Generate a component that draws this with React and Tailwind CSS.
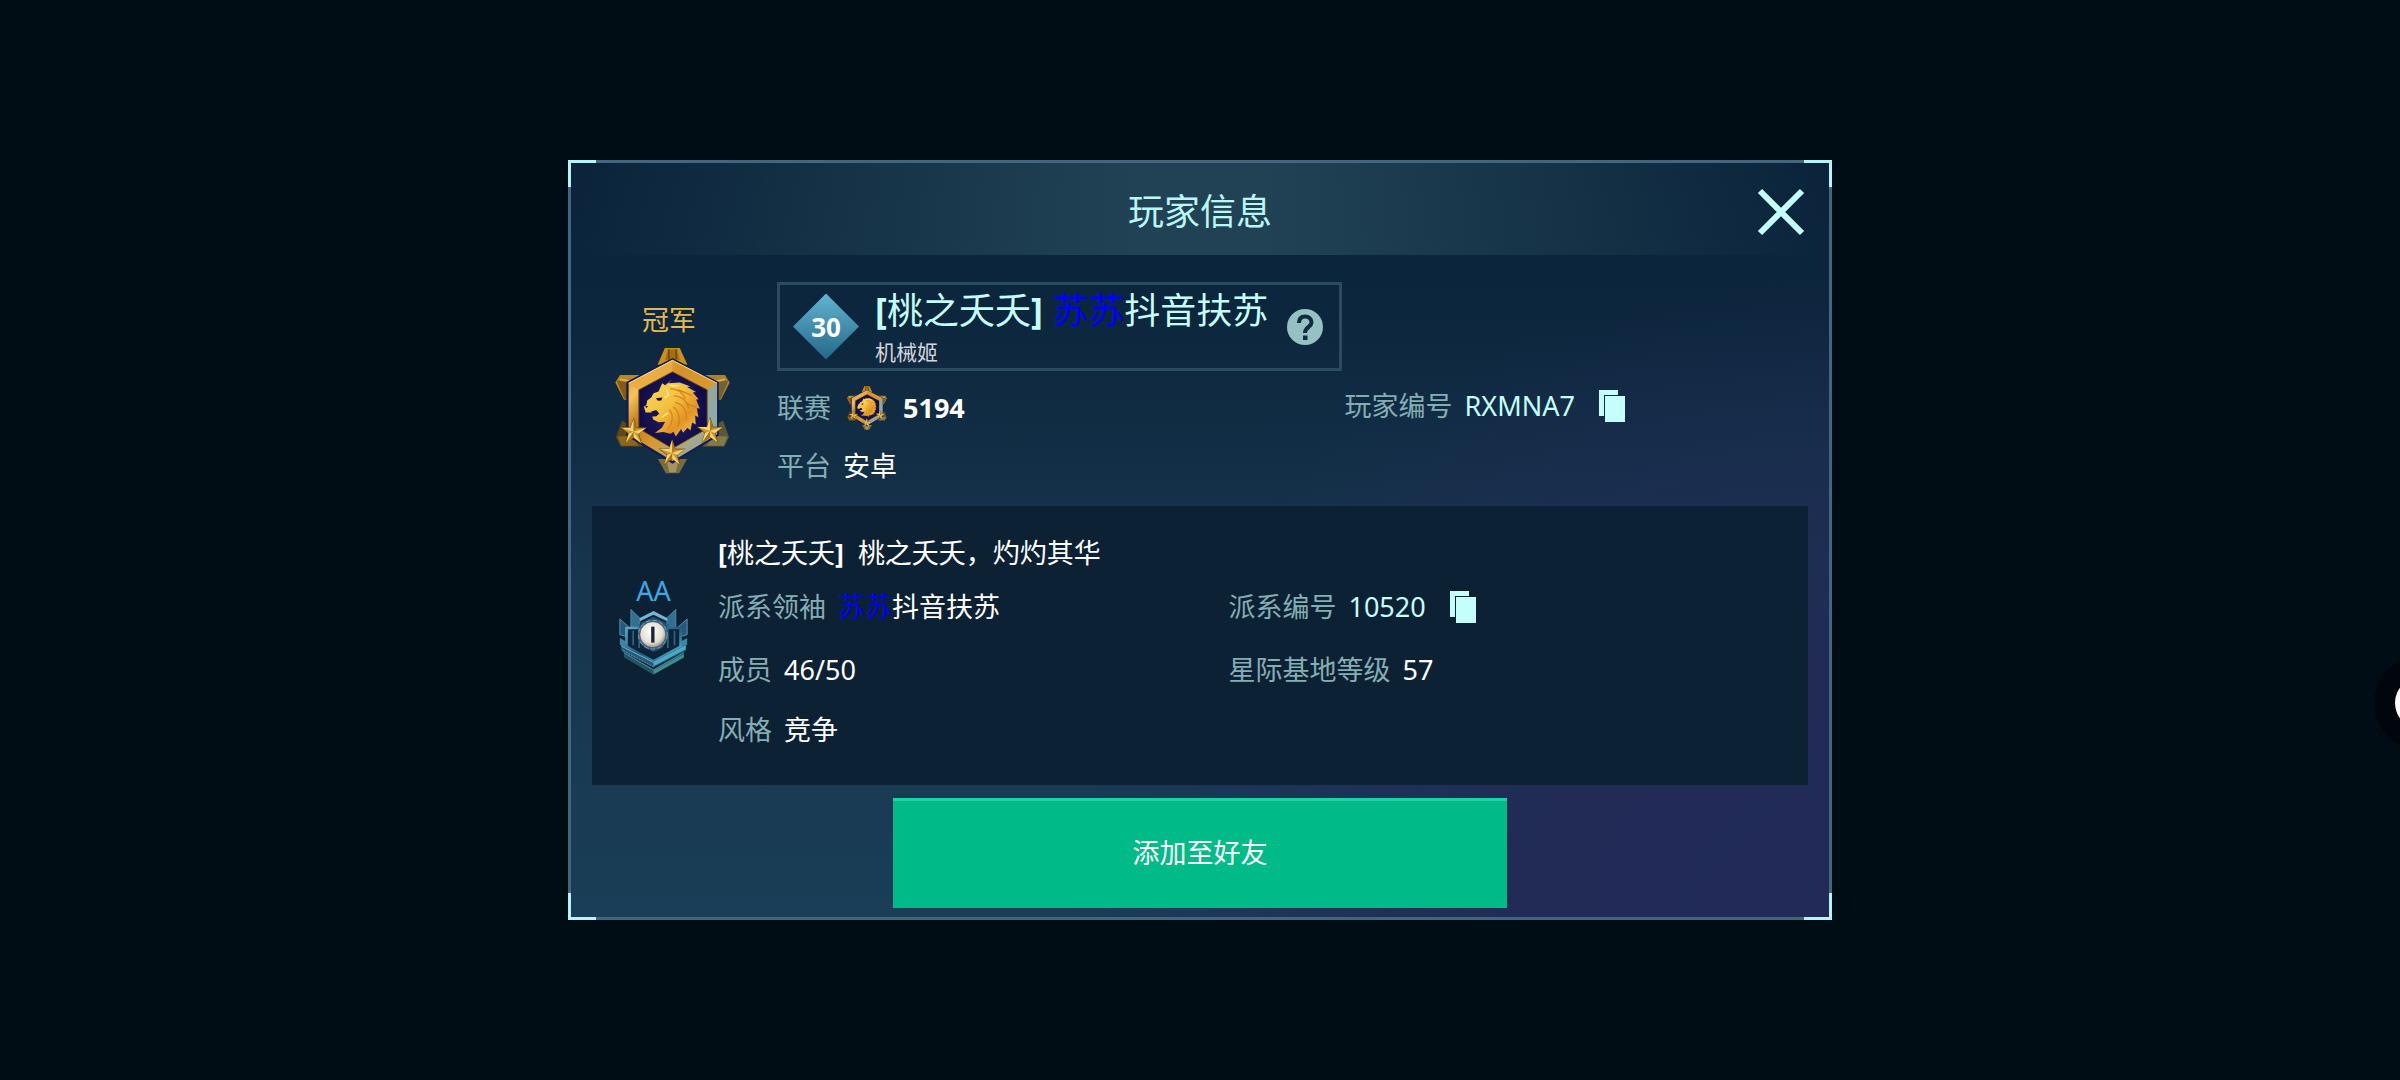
import React, { useState } from "react";

const player = {
  level: 30,
  tag: "桃之夭夭",
  marked: "苏苏",
  name: "抖音扶苏",
  pilot: "机械姬",
  rank: "冠军",
  league: "5194",
  platform: "安卓",
  id: "RXMNA7",
};

const clan = {
  grade: "AA",
  title: "桃之夭夭，灼灼其华",
  id: "10520",
  members: "46/50",
  baseLevel: "57",
  style: "竞争",
};

function Star({ x, y }) {
  return (
    <g transform={`translate(${x} ${y})`}>
      <path d="M0-40 9-12 38-12 15 6 24 35 0 17-24 35-15 6-38-12-9-12Z" fill="#c9952f" stroke="#5b3a0c" strokeWidth="2" />
      <path d="M0-40 0 0-9-12ZM38-12 0 0 15 6ZM24 35 0 0 0 17ZM-24 35 0 0-15 6ZM-38-12 0 0-9-12Z" fill="#f3d470" />
      <path d="M0-40 9-12 0 0ZM-24 35 0 17 0 0Z" fill="#a87420" />
    </g>
  );
}

function LeagueBadge({ id, className }) {
  return (
    <svg viewBox="45 52 346 380" className={className} aria-hidden="true">
      <defs>
        <linearGradient id={`${id}-frame`} x1="0" y1="0" x2="1" y2="1">
          <stop offset="0" stopColor="#d08c22" />
          <stop offset="0.2" stopColor="#f3c45a" />
          <stop offset="0.35" stopColor="#c47d1a" />
          <stop offset="0.55" stopColor="#d99a2e" />
          <stop offset="0.75" stopColor="#a8a888" />
          <stop offset="1" stopColor="#7aa0a8" />
        </linearGradient>
        <linearGradient id={`${id}-lion`} x1="0" y1="0" x2="1" y2="1">
          <stop offset="0" stopColor="#f8dc62" />
          <stop offset="0.45" stopColor="#f3c040" />
          <stop offset="0.7" stopColor="#e39424" />
          <stop offset="1" stopColor="#f5cf5e" />
        </linearGradient>
        <radialGradient id={`${id}-field`}>
          <stop offset="0" stopColor="#25246f" />
          <stop offset="1" stopColor="#110c46" />
        </radialGradient>
      </defs>
      {/* spikes behind the frame */}
      <path d="M195 54H240L263 104H173Z" fill="#c98f22" />
      <path d="M204 58H232L240 90H196Z" fill="#a56c10" />
      <path d="M207 58V88M229 58V88" stroke="#6b420a" strokeWidth="4" />
      <path d="M60 135H122L84 210H72L46 158Z" fill="#bb8626" />
      <path d="M50 152 96 160 84 208H74Z" fill="#855a14" />
      <path d="M60 148 110 158" stroke="#dcb45a" strokeWidth="5" />
      <path d="M376 135H314L352 210H364L390 158Z" fill="#ab812c" />
      <path d="M386 152 340 160 352 208H362Z" fill="#736034" />
      <path d="M376 148 328 158" stroke="#d6b45e" strokeWidth="5" />
      <path d="M66 272 48 322 62 350H128L96 290Z" fill="#5f4616" />
      <path d="M52 320 96 318 116 348H64Z" fill="#8a6620" />
      <path d="M370 272 388 322 374 350H308L340 290Z" fill="#5a5638" />
      <path d="M384 320 340 318 320 348H372Z" fill="#85794c" />
      <path d="M174 388H262L238 431H198Z" fill="#7a6c40" />
      <path d="M200 392H236L228 428H208Z" fill="#a39462" />
      {/* frame */}
      <path d="M218 84 357 156V318L218 402 79 318V156Z" fill="#151b54" />
      <path d="M218 90 352 160V314L218 394 86 314V160Z" fill={`url(#${id}-frame)`} />
      <path d="M218 90 352 160 322 180 218 126 117 180 86 160Z" fill="#d9982e" opacity="0.75" />
      <path d="M218 90V126L117 180 86 160Z" fill="#f0b850" opacity="0.55" />
      <path d="M352 160V314L322 296V180Z" fill="#86a9b2" opacity="0.75" />
      <path d="M86 160 218 91 352 160" fill="none" stroke="#f6da8c" strokeWidth="3" />
      <path d="M218 126 322 180V296L218 356 117 296V180Z" fill={`url(#${id}-field)`} stroke="#5c3b12" strokeWidth="3" />
      {/* lion head, facing left */}
      <path
        d="M217 149 206 160 240 158 272 170 262 171 289 186 279 188 297 208 289 209 300 236 291 235 296 262 286 257 288 284 277 278 272 302 263 294 250 309 244 298 228 320 221 306 212 312 190 307 165 310 186 294 196 276 176 277 160 269 157 260 170 259 176 250 166 241 153 248 137 248 132 230 140 224 142 212 154 203 161 190 176 185 187 160 196 166Z"
        fill={`url(#${id}-lion)`}
      />
      <path d="M168 205 188 203 184 212 174 213ZM135 226 144 229 139 235ZM154 245 170 241 178 252 168 259Z" fill="#17124f" />
      <path
        d="M213 176C236 178 250 190 256 206M222 198C246 200 262 214 266 234M228 218C252 224 262 246 260 270M222 232C240 246 242 272 234 292M210 240C222 258 218 280 204 298M236 180 274 196M262 222 290 232"
        fill="none"
        stroke="#d58420"
        strokeWidth="4"
        strokeLinecap="round"
      />
      <path d="M199 176 206 196 194 204M208 166 236 168M186 262 204 250" fill="none" stroke="#fbe990" strokeWidth="4" />
      <Star x={101} y={306} />
      <Star x={331} y={304} />
      <Star x={217} y={370} />
    </svg>
  );
}

function ClanBadge({ className }) {
  return (
    <svg viewBox="56 145 206 198" className={className} aria-hidden="true">
      <defs>
        <linearGradient id="clan-blue" x1="0" y1="0" x2="1" y2="1">
          <stop offset="0" stopColor="#5fa6c6" />
          <stop offset="0.5" stopColor="#235a7c" />
          <stop offset="1" stopColor="#5ccbe8" />
        </linearGradient>
        <radialGradient id="clan-face" cx="0.45" cy="0.4" r="0.6">
          <stop offset="0" stopColor="#ffffff" />
          <stop offset="0.7" stopColor="#e4dfd2" />
          <stop offset="1" stopColor="#9a968c" />
        </radialGradient>
      </defs>
      <path d="M70 274 159 326 250 274V292L159 342 70 290Z" fill="#235561" />
      <path d="M70 276 159 328 250 276" fill="none" stroke="#4d8f9c" strokeWidth="3" />
      <path d="M159 330 250 280V290L159 341Z" fill="#3f8f8d" />
      <path d="M91 146 118 172V200H91ZM226 146 199 172V200H226Z" fill="#33708f" stroke="#5f9fbd" strokeWidth="2" />
      <path d="M58 175 84 198V230L58 222ZM260 175 234 198V230L260 222Z" fill="#25597a" stroke="#74b9d4" strokeWidth="2" />
      <path d="M58 232 76 242V262L58 252ZM260 232 242 242V262L260 252Z" fill="#3c86a3" />
      <path d="M78 202H240V258L159 302 78 258Z" fill="#0e2438" stroke="url(#clan-blue)" strokeWidth="8" />
      <path d="M98 210V254M222 210V254M116 190V262M202 190V262" stroke="#2c6585" strokeWidth="5" />
      <path d="M118 172 159 151 200 172V182L159 162 118 182Z" fill="#75b6d0" />
      <path d="M122 186 159 168 196 186 204 226 186 262 159 274 132 262 114 226Z" fill="#1f4f72" />
      <path d="M62 254 159 302 256 254V270L159 320 62 270Z" fill="#245a7b" />
      <path d="M62 256 159 305 256 256" fill="none" stroke="#6db6d0" strokeWidth="3" />
      <path d="M68 270 159 319" fill="none" stroke="#8bbccc" strokeWidth="2" strokeDasharray="5 4" />
      <path d="M159 305 256 256V266L159 317Z" fill="#4aa9c4" />
      <circle cx="157" cy="222" r="45" fill="#355f80" />
      <circle cx="157" cy="222" r="43" fill="none" stroke="#7f9db2" strokeWidth="3" strokeDasharray="14 6" />
      <circle cx="157" cy="222" r="39" fill="url(#clan-face)" stroke="#4b4f57" strokeWidth="2" />
      <path d="M157 198V246" stroke="#1a2434" strokeWidth="10" />
    </svg>
  );
}

function CopyButton({ label }) {
  return (
    <button type="button" aria-label={label} className="cursor-pointer">
      <svg viewBox="0 0 26 32" className="h-8 w-[26px]" aria-hidden="true">
        <path d="M0 0H19V5H5V26H0Z" fill="#c4fffb" />
        <path d="M6 6H26V32H6Z" fill="#c4fffb" />
      </svg>
    </button>
  );
}

function Field({ label, children, className = "" }) {
  return (
    <div className={`flex items-center ${className}`}>
      <span className="mr-3 text-[#85aeb4]">{label}</span>
      {children}
    </div>
  );
}

const corners = [
  "-top-[3px] -left-[3px] border-t-[3px] border-l-[3px]",
  "-top-[3px] -right-[3px] border-t-[3px] border-r-[3px]",
  "-bottom-[3px] -left-[3px] border-b-[3px] border-l-[3px]",
  "-bottom-[3px] -right-[3px] border-b-[3px] border-r-[3px]",
];

function App() {
  const [open, setOpen] = useState(true);

  return (
    <div className="relative flex min-h-screen items-center justify-center overflow-hidden bg-[#010d14] font-['Noto_Sans','Noto_Sans_CJK_SC',sans-serif] text-[27px] leading-10 text-white">
      {open && (
        <section
          role="dialog"
          aria-labelledby="dialog-title"
          className="relative w-full max-w-[1264px] border-[3px] border-[#43657f] bg-[radial-gradient(ellipse_60%_85%_at_100%_100%,#222b58_0%,#212b56_40%,transparent_100%),linear-gradient(to_bottom,#0a233a_0%,#0c263d_20%,#17354d_55%,#1a3e57_100%)]"
        >
          {corners.map((corner) => (
            <span key={corner} className={`absolute h-[27px] w-7 border-[#b9f3f5] ${corner}`} />
          ))}

          {/* Header */}
          <header className="grid h-[92px] grid-cols-[1fr_auto_1fr] items-center bg-[linear-gradient(to_right,transparent,#214254_45%,#214254_55%,transparent)] px-6 pt-1.5">
            <h1 id="dialog-title" className="col-start-2 text-4xl text-[#b9f7f7]">
              玩家信息
            </h1>
            <button
              type="button"
              aria-label="关闭"
              onClick={() => setOpen(false)}
              className="cursor-pointer justify-self-end"
            >
              <svg viewBox="0 0 48 48" className="size-12" aria-hidden="true">
                <path d="M3 3 45 45M45 3 3 45" stroke="#c4fffb" strokeWidth="6" />
              </svg>
            </button>
          </header>

          {/* Player */}
          <div className="flex px-[21px] pt-[27px] pb-[11px]">
            <div className="mr-[25px] flex w-40 shrink-0 flex-col items-center pt-[18px]">
              <span className="mr-1.5 text-[#e6b84c]">{player.rank}</span>
              <LeagueBadge id="league-large" className="mt-[7px] h-[127px] w-[115px]" />
            </div>

            <div className="grow">
              <div className="flex h-[89px] w-fit items-center border-[3px] border-[#2c4a60] pr-4 pl-[13px]">
                <div className="grid size-[66px] place-items-center bg-linear-to-b from-[#62b4d2] to-[#256888] text-[26px] font-bold [clip-path:polygon(50%_0,100%_50%,50%_100%,0_50%)]">
                  {player.level}
                </div>
                <div className="ml-4 flex flex-col pt-1">
                  <div className="text-4xl leading-[46px] whitespace-nowrap text-[#c4fffb]">
                    <b>[</b>
                    {player.tag}
                    <b>]</b> <span className="text-[#0000ff]">{player.marked}</span>
                    {player.name}
                  </div>
                  <div className="text-[21px] leading-9 text-[#d5d5dc]">{player.pilot}</div>
                </div>
                <button type="button" aria-label="帮助" className="ml-[19px] cursor-pointer">
                  <svg viewBox="0 0 36 36" className="size-9" aria-hidden="true">
                    <circle cx="18" cy="18" r="18" fill="#94c1c1" />
                    <path
                      d="M12 14C12 9.500 14.500 7.500 18 7.500S24.500 9.500 24.500 13.500C24.500 18 18 18 18 24"
                      fill="none"
                      stroke="#102a41"
                      strokeWidth="4"
                    />
                    <path d="M16 26.500h4.500v4.500H16z" fill="#102a41" />
                  </svg>
                </button>
              </div>

              <div className="mt-2 grid auto-rows-[58px] grid-cols-[567fr_463fr]">
                <Field label="联赛">
                  <LeagueBadge id="league-small" className="ml-1 h-11 w-10" />
                  <b className="ml-4">{player.league}</b>
                </Field>
                <Field label="玩家编号" className="pb-1">
                  <span className="text-[#c4fffb]">{player.id}</span>
                  <span className="ml-6 flex">
                    <CopyButton label="复制玩家编号" />
                  </span>
                </Field>
                <Field label="平台">{player.platform}</Field>
              </div>
            </div>
          </div>

          {/* Clan */}
          <div className="mx-[21px] flex h-[279px] bg-[#0d2135] pl-[27px]">
            <div className="mr-[30px] flex w-[69px] shrink-0 flex-col items-center pt-[65px] text-[#41a5e4]">
              {clan.grade}
              <ClanBadge className="-mt-0.5 h-[66px] w-[69px]" />
            </div>
            <div className="grow pt-5">
              <div className="flex h-[54px] items-center">
                <b>[</b>
                {player.tag}
                <b className="mr-3.5">]</b>
                {clan.title}
              </div>
              <div className="grid grid-cols-[510fr_579fr] grid-rows-[54px_72px_48px]">
                <Field label="派系领袖">
                  <span className="text-[#0000ff]">{player.marked}</span>
                  {player.name}
                </Field>
                <Field label="派系编号">
                  <span className="text-[#c4fffb]">{clan.id}</span>
                  <span className="ml-6 flex">
                    <CopyButton label="复制派系编号" />
                  </span>
                </Field>
                <Field label="成员">{clan.members}</Field>
                <Field label="星际基地等级">{clan.baseLevel}</Field>
                <Field label="风格">{clan.style}</Field>
              </div>
            </div>
          </div>

          <div className="flex justify-center pt-[13px] pb-[9px]">
            <button
              type="button"
              className="h-[110px] w-[614px] cursor-pointer border-t-[3px] border-[#20d0a2] bg-[#00bb88] pb-1"
            >
              添加至好友
            </button>
          </div>
        </section>
      )}

      {/* floating handle, half off the right edge */}
      <div className="absolute top-[656px] -right-[68px] grid size-[94px] place-items-center rounded-full bg-[#01060d]">
        <span className="size-[52px] rounded-full bg-white" />
      </div>
    </div>
  );
}

export default App;
